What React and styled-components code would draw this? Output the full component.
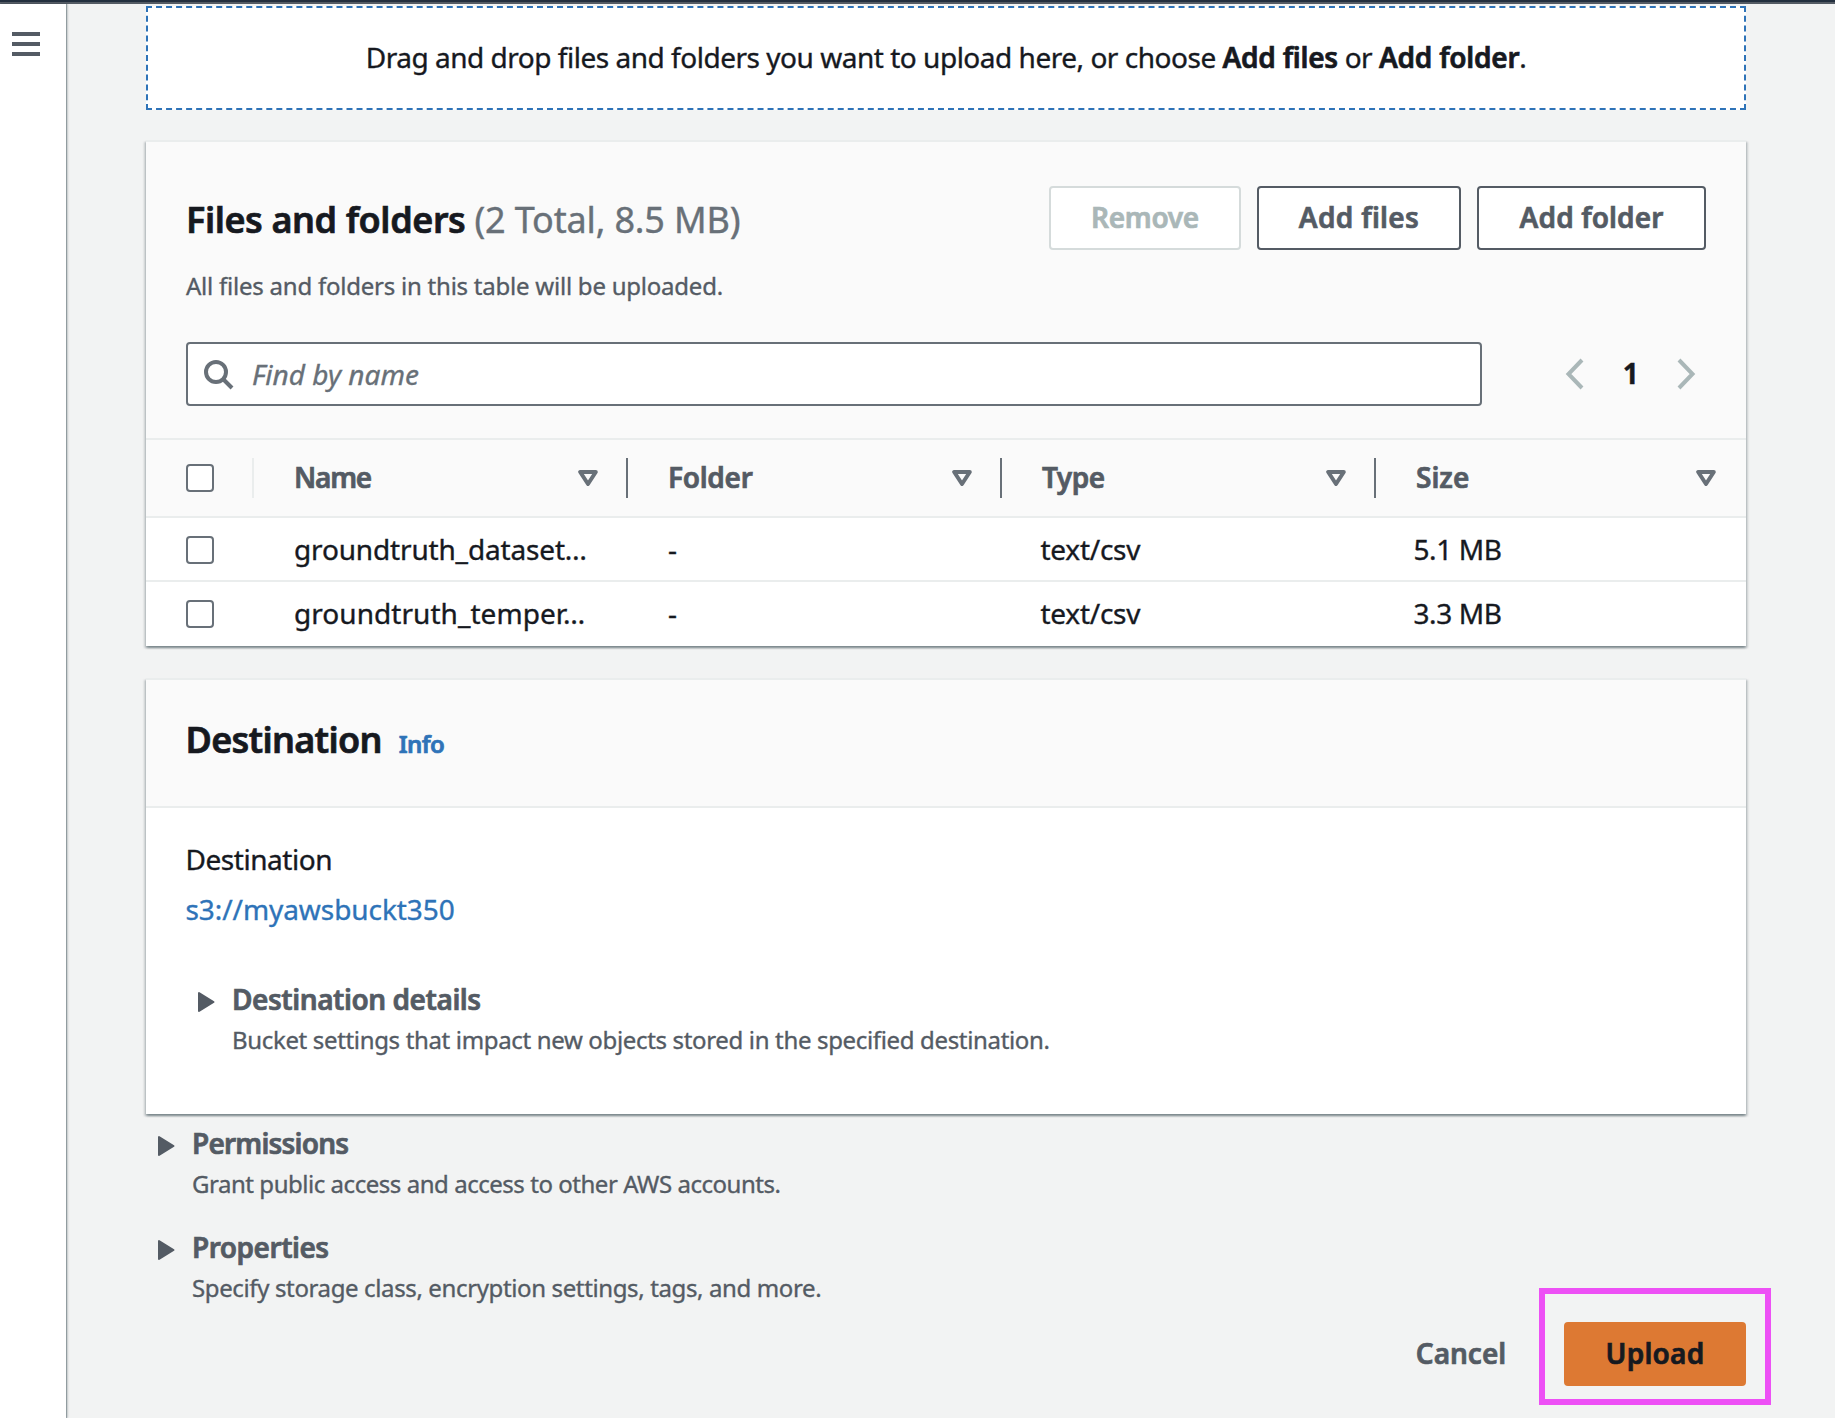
import React from "react";
import styled, { createGlobalStyle, css } from "styled-components";

const GlobalStyle = createGlobalStyle`
  *, *::before, *::after { box-sizing: border-box; }
  body {
    margin: 0;
    background: #f2f3f3;
    color: #16191f;
    font-family: "Noto Sans", "Open Sans", sans-serif;
    font-size: 28px;
    font-weight: 400;
    line-height: 44px;
    letter-spacing: -0.4px;
    -webkit-text-stroke-width: 0.35px;
  }
  h2, h3, p { margin: 0; }
  a { color: #2e73b8; text-decoration: none; }
`;

const strong = css`
  font-weight: 600;
  -webkit-text-stroke-width: 0.7px;
`;

const Page = styled.div`
  height: 1418px;
  overflow: hidden;
  display: flex;
  flex-direction: column;
`;

const TopBar = styled.header`
  flex: none;
  height: 4px;
  background: #232f3e;
  border-bottom: 2px solid #545b64;
`;

const Shell = styled.div`
  flex: 1;
  display: flex;
  min-height: 0;
`;

const SideRail = styled.nav`
  flex: none;
  width: 66px;
  padding: 28px 0 0 12px;
  background: #fff;
  box-shadow: 1px 0 1px rgba(0, 28, 36, 0.3), 2px 0 2px rgba(0, 28, 36, 0.15);
`;

const MenuButton = styled.button`
  display: flex;
  flex-direction: column;
  gap: 6px;
  width: 28px;
  padding: 0;
  border: 0;
  background: none;
`;

const MenuBar = styled.span`
  height: 4px;
  background: #545b64;
`;

const Main = styled.main`
  flex: none;
  width: 1600px;
  margin-left: 80px;
  padding-top: 2px;
`;

const DropZone = styled.div`
  height: 104px;
  padding: 27px 0;
  border: 2px dashed #2e73b8;
  background: #fff;
  text-align: center;
  letter-spacing: -0.48px;
  white-space: nowrap;

  b {
    ${strong}
    letter-spacing: -0.25px;
  }
`;

const Panel = styled.section`
  margin-top: ${(p) => p.$gap};
  border-top: 2px solid #eaeded;
  background: #fff;
  box-shadow: 0 2px 2px rgba(0, 28, 36, 0.3), 2px 2px 2px rgba(0, 28, 36, 0.15),
    -2px 2px 2px rgba(0, 28, 36, 0.15);
`;

const PanelHeader = styled.div`
  padding: ${(p) => p.$pad};
  border-bottom: 2px solid #eaeded;
  background: #fafafa;
`;

const HeaderRow = styled.div`
  display: flex;
  justify-content: space-between;
  align-items: flex-start;
`;

const Title = styled.h2`
  ${strong}
  font-size: 36px;
  line-height: 44px;
  letter-spacing: ${(p) => p.$tracking};
`;

const Counter = styled.span`
  color: #687078;
  font-weight: 400;
  letter-spacing: -0.15px;
  -webkit-text-stroke-width: 0.4px;
`;

const InfoLink = styled.a`
  margin-left: 17px;
  font-size: 24px;
  line-height: 24px;
  letter-spacing: -0.6px;
`;

const TitleBlock = styled.div`
  padding-top: 12px;
`;

const Description = styled.p`
  margin-top: ${(p) => p.$gap};
  color: #545b64;
  font-size: 24px;
  line-height: 32px;
  letter-spacing: ${(p) => p.$tracking};
  white-space: nowrap;
`;

const Buttons = styled.div`
  display: flex;
  gap: 16px;
`;

const Button = styled.button`
  width: ${(p) => p.$width};
  height: 64px;
  padding: 0 0 2px;
  border: 2px solid #545b64;
  border-radius: 4px;
  background: #fff;
  color: #545b64;
  font: inherit;
  ${strong}
  letter-spacing: ${(p) => p.$tracking};
  white-space: nowrap;

  ${(p) => p.$kind === "disabled" && css`
    border-color: #d5dbdb;
    color: #aab7b8;
  `}
  ${(p) => p.$kind === "link" && css`
    border-color: transparent;
    background: transparent;
  `}
  ${(p) => p.$kind === "primary" && css`
    border-color: #dd7933;
    background: #dd7933;
    color: #16191f;
  `}
`;

const Toolbar = styled.div`
  display: flex;
  align-items: center;
  justify-content: space-between;
  margin-top: 40px;
`;

const SearchBox = styled.div`
  display: flex;
  align-items: center;
  gap: 16px;
  width: 1296px;
  height: 64px;
  padding-left: 16px;
  border: 2px solid #687078;
  border-radius: 4px;
  background: #fff;
  color: #687078;
  font-style: italic;
  letter-spacing: 0;
`;

const Pagination = styled.div`
  display: flex;
  align-items: center;
  gap: 36.5px;
  margin-right: 9px;
`;

const PageNumber = styled.span`
  width: 16px;
  padding-bottom: 2px;
  font-weight: 700;
  text-align: center;
`;

const Row = styled.div`
  display: grid;
  grid-template-columns: 108px 374px 374px 374px 370px;
  align-items: center;
  height: 64px;
  box-shadow: ${(p) => (p.$last ? "none" : "inset 0 -2px #eaeded")};
`;

const HeadRow = styled(Row)`
  height: 78px;
  border-bottom: 2px solid #eaeded;
  background: #fafafa;
  box-shadow: none;
`;

const CheckCell = styled.div`
  display: flex;
  align-items: center;
  height: 40px;
  padding-left: 40px;
  border-right: ${(p) => (p.$divider ? "2px solid #eaeded" : "0")};
`;

const Checkbox = styled.span`
  width: 28px;
  height: 28px;
  border: 2px solid #687078;
  border-radius: 4px;
  background: #fff;
`;

const HeadCell = styled.div`
  display: flex;
  align-items: center;
  justify-content: space-between;
  height: 40px;
  padding: 0 28px 0 40px;
  border-right: 2px solid ${(p) => (p.$last ? "transparent" : "#687078")};
  color: #545b64;
  ${strong}
  letter-spacing: ${(p) => p.$tracking};
`;

const Label = styled.span`
  padding-bottom: 2px;
`;

const Cell = styled.div`
  padding: 0 0 2px ${(p) => p.$pad};
  letter-spacing: ${(p) => p.$tracking};
  white-space: nowrap;
`;

const PanelBody = styled.div`
  padding: 29px 39.5px 58px;
`;

const Value = styled.p`
  margin-top: ${(p) => p.$gap || "0"};
  letter-spacing: ${(p) => p.$tracking};
`;

const Expander = styled.section`
  display: grid;
  grid-template-columns: ${(p) => p.$indent} 1fr;
  margin-top: ${(p) => p.$gap};
`;

const CaretSlot = styled.div`
  display: flex;
  align-items: center;
  height: 44px;
  padding: 6px 0 0 12px;
`;

const ExpanderTitle = styled.h3`
  color: #545b64;
  font-size: 28px;
  ${strong}
  line-height: 44px;
  letter-spacing: ${(p) => p.$tracking};
`;

const Footer = styled.footer`
  display: flex;
  justify-content: flex-end;
  gap: 18px;
  margin-top: 18px;
`;

const Highlighted = styled.div`
  position: relative;

  &::after {
    content: "";
    position: absolute;
    inset: -34px -25px -19px;
    border: 6px solid #ed50f5;
  }
`;

const SearchIcon = () => (
  <svg width="32" height="32" viewBox="0 0 32 32" fill="none" stroke="#687078" strokeWidth="4">
    <circle cx="12" cy="14" r="10" />
    <path d="M19 21l9 9" />
  </svg>
);

const Chevron = ({ points }) => (
  <svg width="22" height="32" viewBox="0 0 22 32" fill="none" stroke="#aab7b8" strokeWidth="4">
    <polyline points={points} />
  </svg>
);

const SortIcon = () => (
  <svg width="20" height="16" viewBox="0 0 20 16" fill="none" stroke="#687078" strokeWidth="4" strokeLinejoin="round">
    <path d="M2.2 2h15.6L10 14z" />
  </svg>
);

const Caret = () => (
  <svg width="17" height="22" viewBox="0 0 17 22" fill="#545b64" stroke="#545b64" strokeWidth="2" strokeLinejoin="round">
    <path d="M1 2v18l14.500-9z" />
  </svg>
);

const columns = [
  { name: "Name", tracking: "-1.2px" },
  { name: "Folder", tracking: "-0.3px" },
  { name: "Type", tracking: "-0.5px" },
  { name: "Size", tracking: "0" },
];

const files = [
  { name: "groundtruth_dataset…", tracking: "-0.16px", folder: "-", type: "text/csv", size: "5.1 MB" },
  { name: "groundtruth_temper…", tracking: "0.05px", folder: "-", type: "text/csv", size: "3.3 MB" },
];

function Expandable({ title, text, indent, gap, titleTracking, textTracking }) {
  return (
    <Expander $indent={indent} $gap={gap}>
      <CaretSlot><Caret /></CaretSlot>
      <div>
        <ExpanderTitle $tracking={titleTracking}>{title}</ExpanderTitle>
        <Description $gap="3px" $tracking={textTracking}>{text}</Description>
      </div>
    </Expander>
  );
}

export default function App() {
  return (
    <Page>
      <GlobalStyle />
      <TopBar />
      <Shell>
        <SideRail>
          <MenuButton aria-label="Menu"><MenuBar /><MenuBar /><MenuBar /></MenuButton>
        </SideRail>
        <Main>
          <DropZone>
            Drag and drop files and folders you want to upload here, or choose <b>Add files</b> or <b>Add folder</b>.
          </DropZone>

          <Panel $gap="30px">
            <PanelHeader $pad="44px 40px 32px">
              <HeaderRow>
                <TitleBlock>
                  <Title $tracking="-0.42px">Files and folders <Counter>(2 Total, 8.5 MB)</Counter></Title>
                  <Description $gap="28px" $tracking="-0.23px">All files and folders in this table will be uploaded.</Description>
                </TitleBlock>
                <Buttons>
                  <Button $kind="disabled" $width="192px" $tracking="-0.3px">Remove</Button>
                  <Button $width="204px" $tracking="0.3px">Add files</Button>
                  <Button $width="229px" $tracking="0.1px">Add folder</Button>
                </Buttons>
              </HeaderRow>
              <Toolbar>
                <SearchBox><SearchIcon />Find by name</SearchBox>
                <Pagination>
                  <Chevron points="18,2 4.500,16 18,30" />
                  <PageNumber>1</PageNumber>
                  <Chevron points="4,2 17.500,16 4,30" />
                </Pagination>
              </Toolbar>
            </PanelHeader>
            <HeadRow>
              <CheckCell $divider><Checkbox /></CheckCell>
              {columns.map((column, i) => (
                <HeadCell key={column.name} $tracking={column.tracking} $last={i === columns.length - 1}>
                  <Label>{column.name}</Label>
                  <SortIcon />
                </HeadCell>
              ))}
            </HeadRow>
            {files.map((file, i) => (
              <Row key={file.name} $last={i === files.length - 1}>
                <CheckCell><Checkbox /></CheckCell>
                <Cell $pad="40px" $tracking={file.tracking}>{file.name}</Cell>
                <Cell $pad="40px" $tracking="0">{file.folder}</Cell>
                <Cell $pad="38.5px" $tracking="-0.25px">{file.type}</Cell>
                <Cell $pad="37.5px" $tracking="-0.4px">{file.size}</Cell>
              </Row>
            ))}
          </Panel>

          <Panel $gap="32px">
            <PanelHeader $pad="38px 39.5px 44px">
              <Title $tracking="-0.7px">Destination<InfoLink href="#">Info</InfoLink></Title>
            </PanelHeader>
            <PanelBody>
              <Value $tracking="-0.45px">Destination</Value>
              <Value $gap="6px" $tracking="-0.07px"><a href="#">s3://myawsbuckt350</a></Value>
              <Expandable
                title="Destination details"
                text="Bucket settings that impact new objects stored in the specified destination."
                indent="46.5px" gap="46px" titleTracking="-0.45px" textTracking="-0.34px"
              />
            </PanelBody>
          </Panel>

          <Expandable
            title="Permissions"
            text="Grant public access and access to other AWS accounts."
            indent="46px" gap="7px" titleTracking="-0.8px" textTracking="-0.46px"
          />
          <Expandable
            title="Properties"
            text="Specify storage class, encryption settings, tags, and more."
            indent="46px" gap="25px" titleTracking="-0.5px" textTracking="-0.37px"
          />

          <Footer>
            <Button $kind="link" $width="170px" $tracking="0">Cancel</Button>
            <Highlighted><Button $kind="primary" $width="182px" $tracking="0.2px">Upload</Button></Highlighted>
          </Footer>
        </Main>
      </Shell>
    </Page>
  );
}
